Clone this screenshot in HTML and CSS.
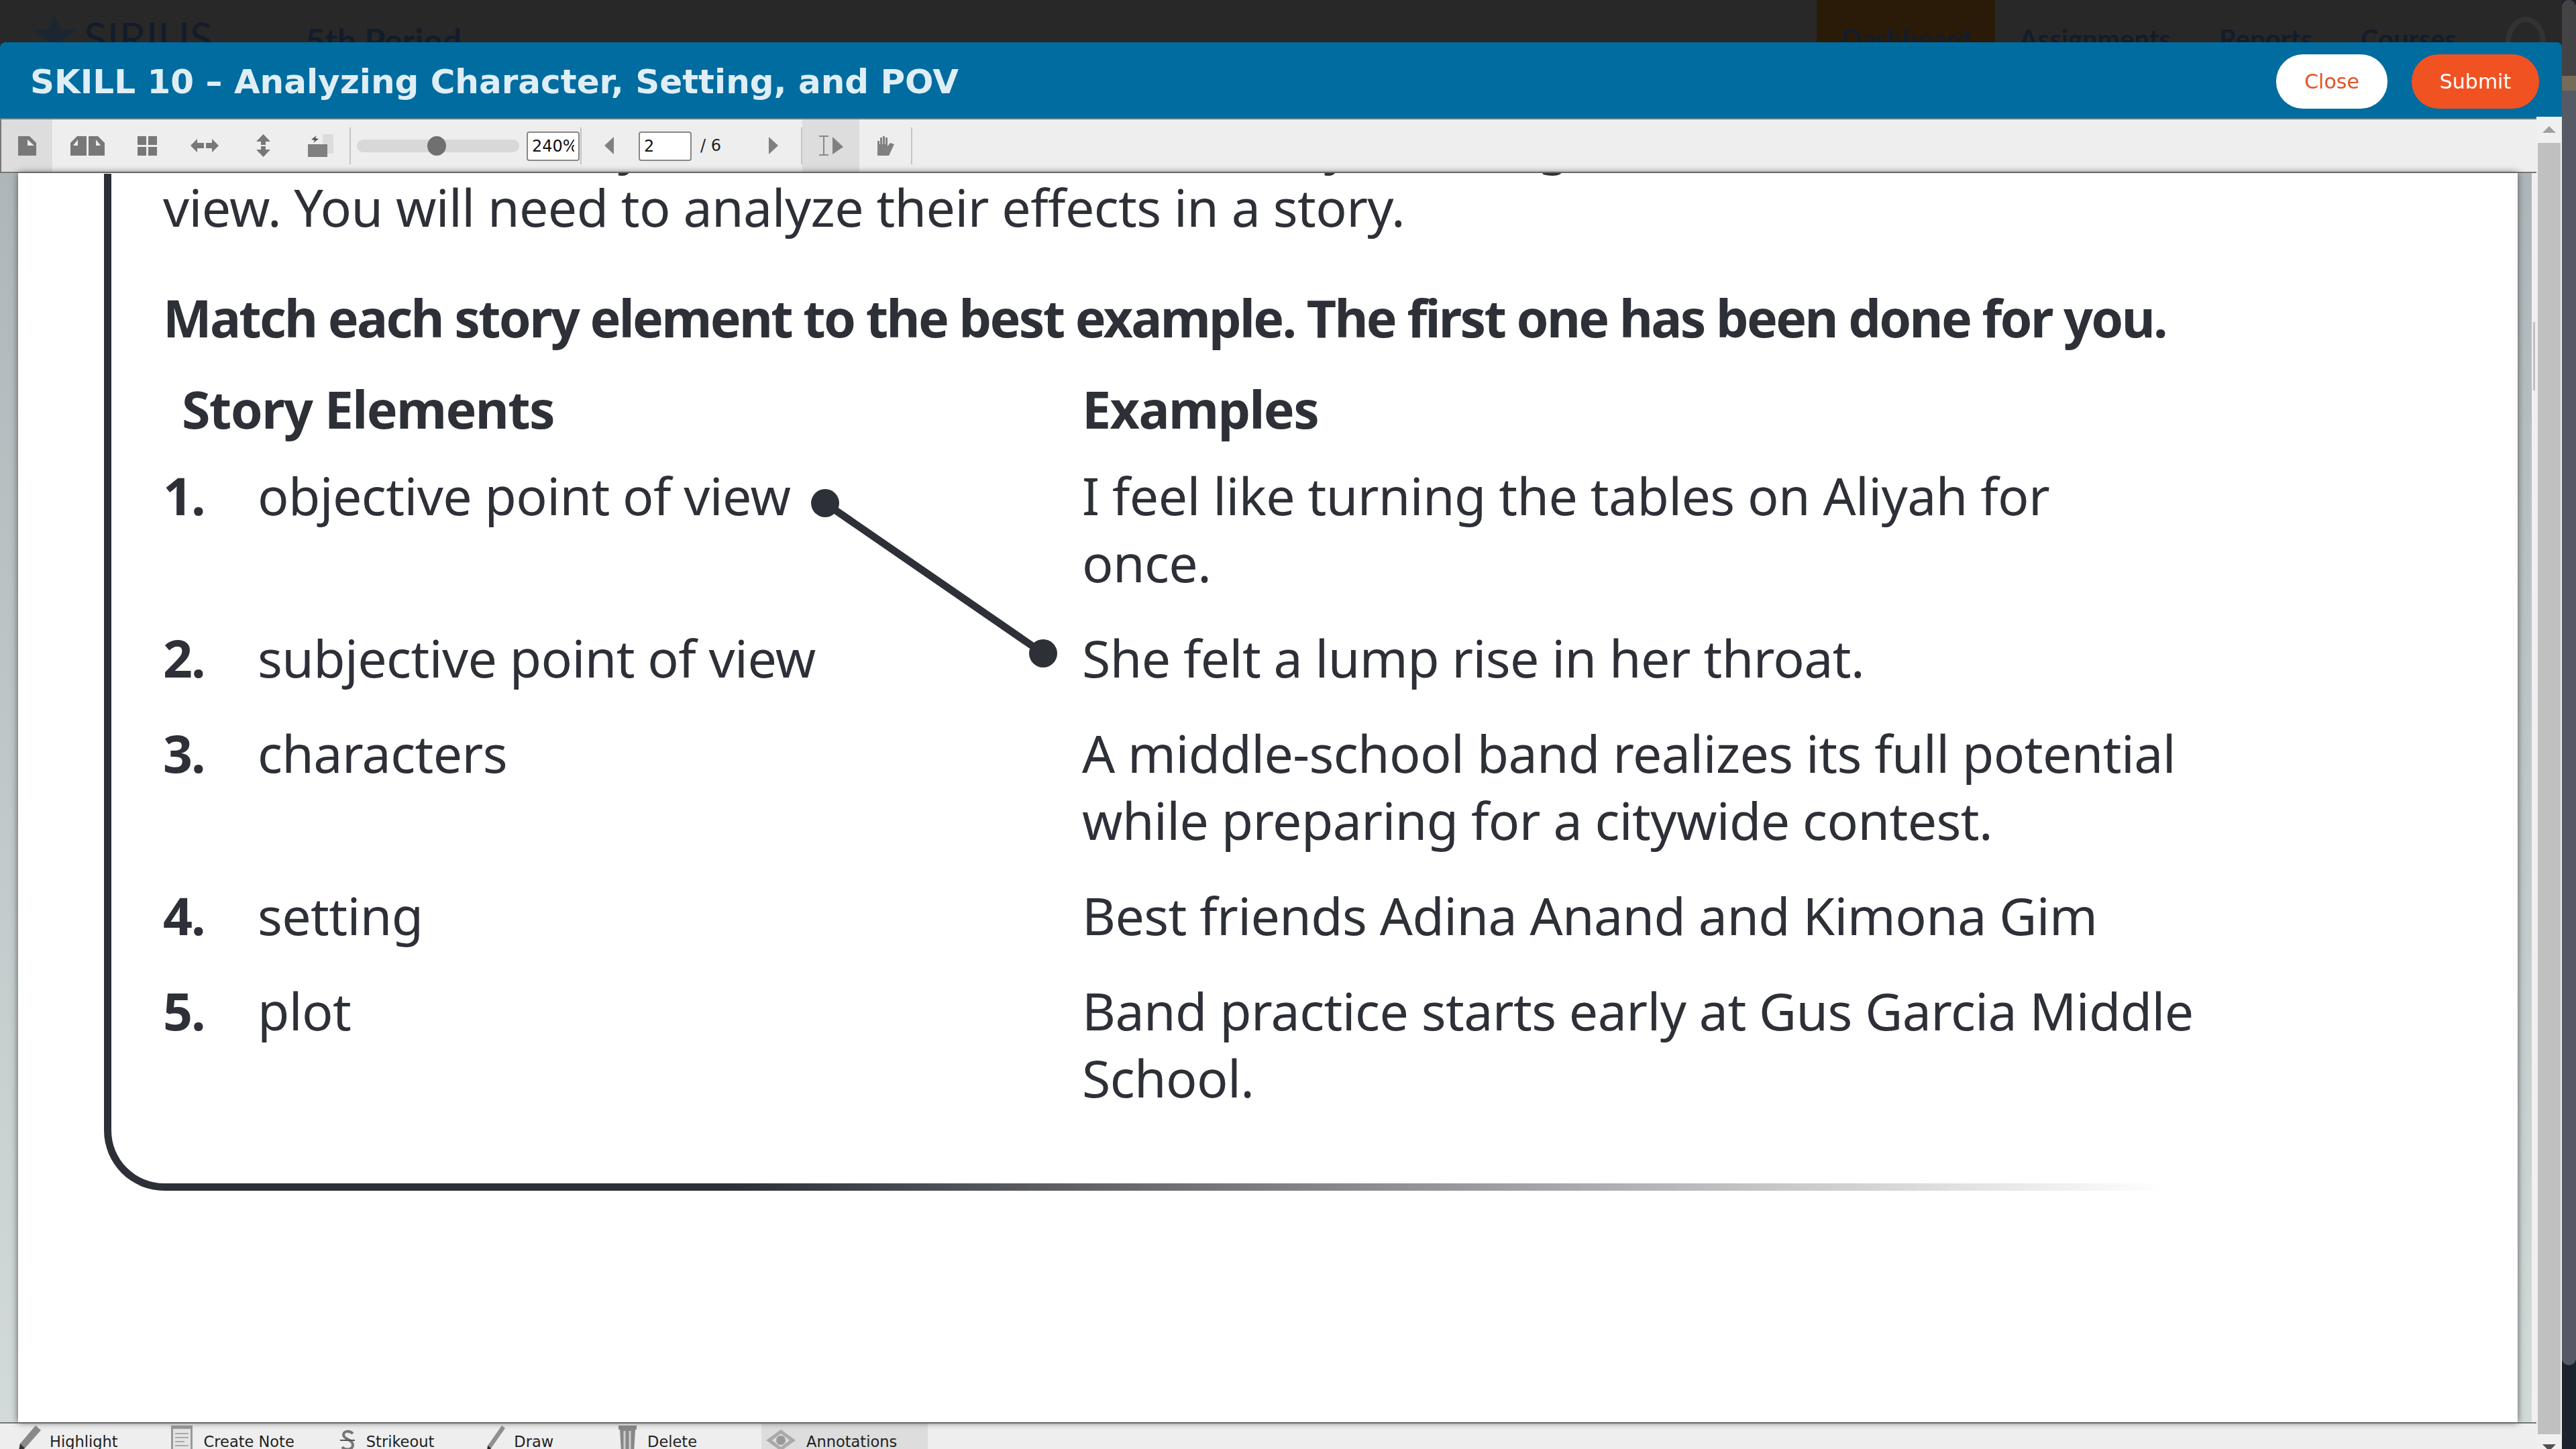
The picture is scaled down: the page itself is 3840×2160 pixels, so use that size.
FILE: index.html
```html
<!DOCTYPE html>
<html lang="en">
<head>
  <meta charset="utf-8">
  <title>SKILL 10 - Analyzing Character, Setting, and POV</title>
  <link rel="stylesheet" href="styles.css">
</head>
<body>
  <div class="app">
    <!-- Site bar, dimmed behind the modal -->
    <div class="site-bar">
      <svg class="site-logo" width="66" height="60" viewBox="0 0 66 60">
        <path d="M33 0L42 22H66L46 36L33 60L20 36L0 22H24Z" fill="#1b2632"/>
        <path d="M8 36L26 50L16 60H4Z" fill="#33281c"/>
      </svg>
      <span class="site-name">SIRIUS</span>
      <span class="site-period">5th Period</span>
      <nav class="site-nav">
        <span class="nav-item nav-active">Dashboard</span>
        <span class="nav-item">Assignments</span>
        <span class="nav-item">Reports</span>
        <span class="nav-item">Courses</span>
      </nav>
      <div class="site-avatar"></div>
    </div>

    <div class="modal">
      <div class="modal-head">
        <h1 class="modal-title">SKILL 10 – Analyzing Character, Setting, and POV</h1>
        <button class="pill pill-close">Close</button>
        <button class="pill pill-submit">Submit</button>
      </div>

      <div class="modal-body">
        <div class="viewer">
          <!-- PDF toolbar -->
          <div class="toolbar">
            <div class="view-tools">
              <div class="tool tool-on">
                <svg width="27" height="29" viewBox="0 0 27 29"><path d="M0 0H17L27 10V29H0Z" fill="#787878"/><path d="M14 5V14H24Z" fill="#eee"/></svg>
              </div>
              <div class="tool">
                <svg width="51" height="29" viewBox="0 0 51 29"><path d="M10 0H24V29H0V10Z" fill="#787878"/><path d="M27 0H41L51 10V29H27Z" fill="#787878"/><path d="M11 5V14H4Z" fill="#eee"/><path d="M38 5V14H45Z" fill="#eee"/></svg>
              </div>
              <div class="tool">
                <svg width="29" height="29" viewBox="0 0 29 29"><path d="M0 0H13V13H0ZM16 0H29V13H16ZM0 16H13V29H0ZM16 16H29V29H16Z" fill="#787878"/></svg>
              </div>
              <div class="tool">
                <svg width="42" height="22" viewBox="0 0 42 22"><path d="M0 11L10 1V7H20V15H10V21ZM42 11L32 1V7H23V15H32V21Z" fill="#787878"/></svg>
              </div>
              <div class="tool">
                <svg width="21" height="34" viewBox="0 0 21 34"><path d="M10.5 0L21 11H14V16H7V11H0ZM10.5 34L21 23H14V18H7V23H0Z" fill="#787878"/></svg>
              </div>
              <div class="tool">
                <svg class="rotate-icon" width="38" height="34" viewBox="0 0 38 34"><path d="M22 0H38V29H29V15H22Z" fill="#dcdcdc"/><path d="M0 15H29V34H0Z" fill="#808080"/><path d="M13 2L5 8L10 9L8 13L16 7L11 6Z" fill="#555"/></svg>
              </div>
            </div>
            <div class="tool-sep"></div>
            <div class="zoom-slider"><div class="zoom-knob"></div></div>
            <input class="num-box zoom-box" type="text" value="240%">
            <div class="tool-sep sep-tight"></div>
            <svg class="prev-arrow" width="14" height="26" viewBox="0 0 14 26"><path d="M14 0V26L0 13Z" fill="#808080"/></svg>
            <input class="num-box page-box" type="text" value="2">
            <span class="page-total">/ 6</span>
            <svg class="next-arrow" width="14" height="26" viewBox="0 0 14 26"><path d="M0 0V26L14 13Z" fill="#808080"/></svg>
            <div class="tool-sep sep-tight"></div>
            <div class="tool select-tool tool-on">
              <svg width="38" height="30" viewBox="0 0 38 30"><path d="M1 1H15M8 1V29M1 29H15" stroke="#888" stroke-width="2" fill="none"/><path d="M21 2L37 17L21 28Z" fill="#808080"/></svg>
            </div>
            <div class="tool hand-tool">
              <svg width="27" height="30" viewBox="0 0 27 30"><path d="M2 8H5V13H6V3H9V13H10V1H13V13H14V3H17V16L21 11L27 13L19 30H2Z" fill="#808080"/></svg>
            </div>
            <div class="tool-sep"></div>
          </div>

          <div class="doc-area">
            <div class="doc-page">
              <div class="cut-line"><span>y</span><span>y</span><span>g</span><span>,</span></div>
              <div class="panel">
                <p class="intro">view. You will need to analyze their effects in a story.</p>
                <p class="task">Match each story element to the best example. The first one has been done for you.</p>
                <div class="match-grid">
                  <div class="col-head head-left">Story Elements</div>
                  <div class="col-head">Examples</div>

                  <div class="num">1.</div>
                  <div>objective point of view</div>
                  <div>I feel like turning the tables on Aliyah for<br>once.</div>

                  <div class="num">2.</div>
                  <div>subjective point of view</div>
                  <div>She felt a lump rise in her throat.</div>

                  <div class="num">3.</div>
                  <div>characters</div>
                  <div>A middle-school band realizes its full potential<br>while preparing for a citywide contest.</div>

                  <div class="num">4.</div>
                  <div>setting</div>
                  <div>Best friends Adina Anand and Kimona Gim</div>

                  <div class="num">5.</div>
                  <div>plot</div>
                  <div>Band practice starts early at Gus Garcia Middle<br>School.</div>
                </div>
              </div>
              <!-- Answer line the student drew -->
              <svg class="connector" width="3728" height="1862" viewBox="0 0 3728 1862">
                <line x1="1203" y1="492" x2="1528" y2="716" stroke="#2e3038" stroke-width="11"/>
                <circle cx="1203" cy="492" r="21" fill="#2e3038"/>
                <circle cx="1528" cy="716" r="21" fill="#2e3038"/>
              </svg>
            </div>
            <div class="doc-rail"><div class="doc-rail-thumb"></div></div>
          </div>

          <!-- Annotation toolbar -->
          <div class="annot-bar">
            <div class="annot annot-highlight">
              <svg width="36" height="40" viewBox="0 0 36 40"><path d="M28 0L36 7L12 34L3 38L5 27Z" fill="#8a8a8a"/><path d="M5 27L12 34L3 38Z" fill="#333"/></svg>
              <span>Highlight</span>
            </div>
            <div class="annot annot-note">
              <svg width="32" height="40" viewBox="0 0 32 40"><rect width="32" height="40" fill="#999"/><rect x="3" y="5" width="26" height="35" fill="#e4e4e4"/><path d="M6 12H26M6 18H26M6 24H20M6 30H26" stroke="#aaa" stroke-width="2"/></svg>
              <span>Create Note</span>
            </div>
            <div class="annot annot-strike">
              <svg width="22" height="34" viewBox="0 0 22 34"><path d="M19 6C14 1 5 2 5 8C5 15 19 14 19 23C19 30 8 32 3 26" stroke="#777" stroke-width="4" fill="none"/><path d="M0 16H22" stroke="#555" stroke-width="2"/></svg>
              <span>Strikeout</span>
            </div>
            <div class="annot annot-draw">
              <svg width="28" height="40" viewBox="0 0 28 40"><path d="M23 0L28 4L7 34L1 38L2 30Z" fill="#909090"/><path d="M2 30L7 34L1 40Z" fill="#222"/></svg>
              <span>Draw</span>
            </div>
            <div class="annot annot-delete">
              <svg width="27" height="40" viewBox="0 0 27 40"><path d="M0 0H27V6H25L23 40H4L2 6H0Z" fill="#888"/><path d="M9 8V38M17 8V38" stroke="#ccc" stroke-width="3"/></svg>
              <span>Delete</span>
            </div>
            <div class="annot annot-eye tool-on">
              <svg width="46" height="40" viewBox="0 0 46 40"><path d="M1 22L23 6L45 22L23 38Z" fill="#aaa"/><path d="M10 22L23 12L36 22L23 32Z" fill="#ddd"/><circle cx="23" cy="22" r="7" fill="#999"/></svg>
              <span>Annotations</span>
            </div>
          </div>
        </div>

        <!-- Scrollbar of the document frame -->
        <div class="frame-scroll">
          <div class="frame-btn"><div class="tri-up"></div></div>
          <div class="frame-thumb"></div>
          <div class="frame-btn frame-btn-down"><div class="tri-down"></div></div>
        </div>
      </div>
    </div>
  </div>

  <!-- Scrollbar of the page behind -->
  <div class="page-scroll"><div class="page-thumb"></div></div>
</body>
</html>
```

FILE: styles.css
```css
html, body {
  margin: 0;
  height: 2160px;
  overflow: hidden;
}

body {
  display: flex;
  background-color: #1c222c;
  font-family: "DejaVu Sans", sans-serif;
}

.app {
  width: 3819px;
  height: 2160px;
  display: flex;
  flex-direction: column;
  background-color: #282828;
}

/* Site bar */
.site-bar {
  height: 63px;
  flex-shrink: 0;
  display: flex;
  align-items: flex-start;
  overflow: hidden;
  color: #141c2a;
  font-family: Lato, sans-serif;
  font-weight: 700;
}

.site-logo {
  margin: 22px 0 0 48px;
}

.site-name {
  margin: 18px 0 0 11px;
  font-size: 64px;
  line-height: 76px;
  font-weight: 400;
}

.site-period {
  margin: 30px 0 0 138px;
  font-size: 50px;
  line-height: 60px;
}

.site-nav {
  margin-left: auto;
  display: flex;
  height: 63px;
}

.nav-item {
  padding: 34px 36px 0;
  font-size: 40px;
  line-height: 48px;
}

.nav-active {
  background-color: #2a1b08;
}

.site-avatar {
  width: 44px;
  height: 60px;
  margin: 25px 24px 0 37px;
  border: 8px solid #333;
  border-radius: 50%;
}

/* Modal */
.modal {
  flex: 1;
  min-height: 0;
  display: flex;
  flex-direction: column;
}

.modal-head {
  height: 113px;
  flex-shrink: 0;
  display: flex;
  align-items: center;
  padding: 0 34px 0 45px;
  background-color: #006c9f;
  border-radius: 8px 8px 0 0;
}

.modal-title {
  flex: 1;
  margin: 4px 0 0;
  color: #dfeef6;
  font-size: 50px;
  font-weight: 700;
}

.pill {
  height: 81px;
  margin-top: 4px;
  border: none;
  border-radius: 40px;
  font-family: "DejaVu Sans", sans-serif;
  font-size: 30px;
  padding: 0;
}

.pill-close {
  width: 166px;
  margin-right: 36px;
  background-color: #fff;
  color: #e2552a;
}

.pill-submit {
  width: 190px;
  background-color: #f15222;
  color: #fff;
}

.modal-body {
  flex: 1;
  min-height: 0;
  display: flex;
}

.viewer {
  width: 3781px;
  display: flex;
  flex-direction: column;
}

/* Toolbar */
.toolbar {
  height: 78px;
  flex-shrink: 0;
  display: flex;
  align-items: center;
  background-color: #eee;
  border-top: 2px solid #5f7f90;
  border-bottom: 2px solid #777;
  border-left: 2px solid #777;
  color: #222;
  font-size: 24px;
}

.view-tools {
  display: grid;
  grid-template-columns: 76px 104px 74px 98px 76px 91px;
  height: 100%;
}

.tool {
  display: flex;
  align-items: center;
  justify-content: center;
}

.tool-on {
  background-color: #ddd;
}

.rotate-icon {
  margin-left: 5px;
}

.tool-sep {
  width: 2px;
  height: 55px;
  background-color: #c4c4c4;
}

.sep-tight {
  margin-left: 1px;
}

.zoom-slider {
  position: relative;
  width: 242px;
  height: 19px;
  margin: 0 11px 0 9px;
  background-color: #d8d8d8;
  border-radius: 10px;
}

.zoom-knob {
  position: absolute;
  left: 105px;
  top: -5px;
  width: 28px;
  height: 29px;
  background-color: #707070;
  border-radius: 50%;
}

.num-box {
  box-sizing: border-box;
  height: 44px;
  margin-top: 2px;
  padding: 0 6px;
  background-color: #fff;
  border: 2px solid #888;
  border-radius: 4px;
  color: #111;
  font-family: "DejaVu Sans", sans-serif;
  font-size: 24px;
  outline: none;
}

.zoom-box {
  width: 79px;
}

.prev-arrow {
  margin: 0 37px 0 34px;
}

.page-box {
  width: 79px;
}

.page-total {
  margin-left: 13px;
  width: 34px;
  white-space: nowrap;
}

.next-arrow {
  margin: 0 33px 0 68px;
}

.select-tool {
  width: 85px;
  height: 100%;
}

.hand-tool {
  width: 77px;
  height: 100%;
}

/* Document area */
.doc-area {
  flex: 1;
  min-height: 0;
  display: flex;
  padding-left: 27px;
  background: linear-gradient(#aeb6ba, #d2dbd9);
}

.doc-page {
  position: relative;
  width: 3728px;
  overflow: hidden;
  background-color: #fff;
  box-shadow: 0 0 10px #555;
  color: #2e3038;
  font-family: "Noto Sans", sans-serif;
  font-size: 77px;
  line-height: 100px;
  letter-spacing: -0.6px;
  white-space: nowrap;
}

.cut-line {
  margin: -93px 0 -6px 216px;
  height: 100px;
}

.cut-line span:nth-child(1) { margin-left: 678px; }
.cut-line span:nth-child(2) { margin-left: 1014px; }
.cut-line span:nth-child(3) { margin-left: 280px; }
.cut-line span:nth-child(4) { margin-left: 597px; }

.panel {
  box-sizing: border-box;
  width: 3105px;
  margin-left: 128px;
  padding: 0 0 107px 77px;
  border: solid transparent;
  border-width: 0 0 11px 11px;
  border-radius: 0 0 0 90px;
  background:
    linear-gradient(#fff, #fff) padding-box,
    linear-gradient(to right, #2e3038 30%, rgba(46, 48, 56, 0) 99%) border-box;
}

.intro {
  margin: 0 0 65px;
}

.task {
  margin: 0 0 36px;
  font-weight: 700;
  letter-spacing: -2.7px;
}

.match-grid {
  display: grid;
  grid-template-columns: 141px 1229px 1fr;
  row-gap: 42px;
}

.col-head {
  margin-bottom: -13px;
  font-weight: 700;
  letter-spacing: -1.6px;
}

.head-left {
  grid-column: 1 / span 2;
  padding-left: 28px;
}

.num {
  font-weight: 700;
  letter-spacing: -2px;
}

.connector {
  position: absolute;
  left: 0;
  top: 0;
}

.doc-rail {
  width: 5px;
  margin-left: 21px;
  padding-top: 222px;
  background-color: #f0f0f0;
  border-left: 2px solid #f0f0f0;
}

.doc-rail-thumb {
  width: 3px;
  height: 102px;
  background-color: #c0c0c0;
}

/* Annotation bar */
.annot-bar {
  height: 38px;
  flex-shrink: 0;
  display: flex;
  background-color: #eee;
  border-top: 2px solid #777;
  overflow: hidden;
  color: #222;
  font-size: 22.5px;
}

.annot {
  display: flex;
  align-items: flex-start;
  height: 40px;
  white-space: nowrap;
}

.annot span {
  line-height: 30px;
  margin-top: 12px;
}

.annot svg {
  margin-top: 3px;
}

.annot-highlight { margin-left: 25px; gap: 13px; }
.annot-note { margin-left: 79px; gap: 17px; }
.annot-strike { margin-left: 68px; gap: 17px; }
.annot-strike svg { margin-top: 9px; }
.annot-draw { margin-left: 78px; gap: 13px; }
.annot-delete { margin-left: 97px; gap: 16px; }

.annot-eye {
  margin-left: 96px;
  width: 248px;
  padding-left: 6px;
  box-sizing: border-box;
  gap: 15px;
}

/* Scrollbars */
.frame-scroll {
  width: 38px;
  display: flex;
  flex-direction: column;
  background-color: #f0f0f0;
  margin-top: -2px;
}

.frame-btn {
  height: 39px;
  flex-shrink: 0;
  display: flex;
  justify-content: center;
  padding-top: 14px;
  box-sizing: border-box;
}

.frame-btn-down {
  height: 22px;
  padding-top: 15px;
}

.frame-thumb {
  flex: 1;
  margin: 0 2px;
  background-color: #c0c0c0;
}

.tri-up {
  width: 0;
  height: 0;
  border-left: 10px solid transparent;
  border-right: 10px solid transparent;
  border-bottom: 10px solid #a0a0a0;
}

.tri-down {
  width: 0;
  height: 0;
  border-left: 10px solid transparent;
  border-right: 10px solid transparent;
  border-top: 10px solid #505050;
}

.page-scroll {
  width: 21px;
  height: 2160px;
}

.page-thumb {
  height: 2035px;
  border-radius: 10px;
  background: linear-gradient(#434345 113px, #746c58 113px, #746c58 135px, #555a64 135px);
}
```
